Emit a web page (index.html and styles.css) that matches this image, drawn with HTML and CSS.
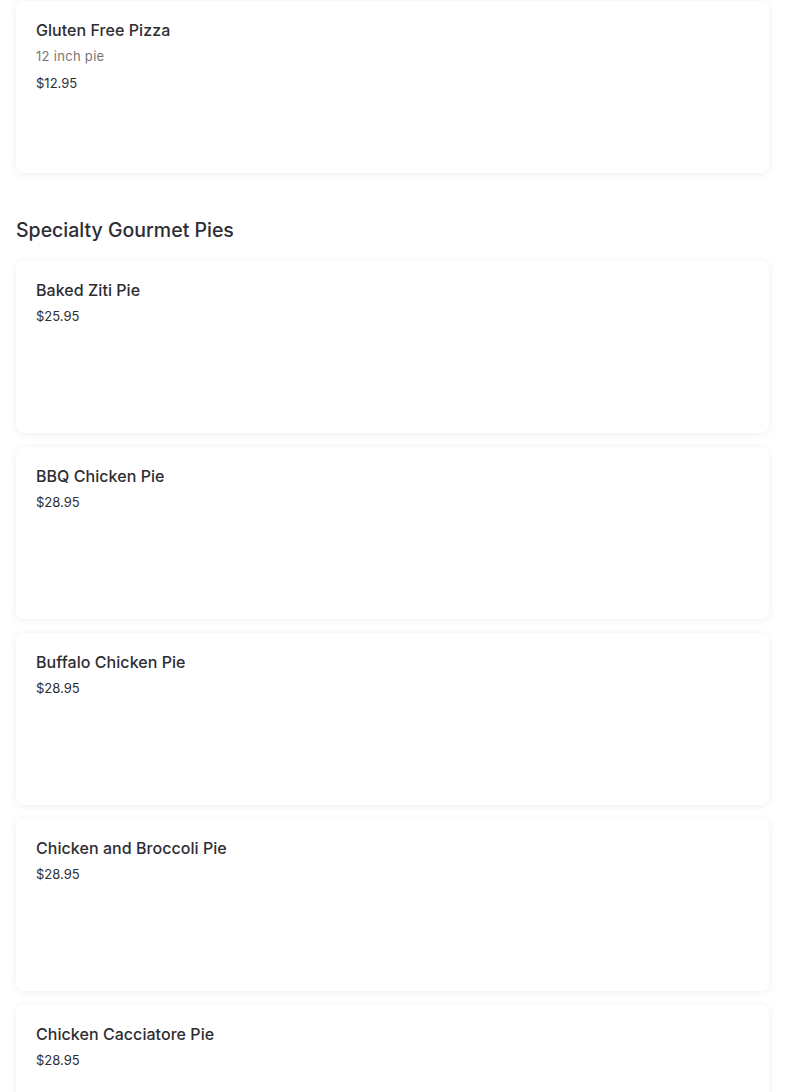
FILE: index.html
```html
<!DOCTYPE html>
<html>
<head>
<meta charset="utf-8">
<link rel="stylesheet" href="styles.css">
</head>
<body>
<div class="page">
  <div class="list">
    <div class="card">
      <div class="title">Gluten Free Pizza</div>
      <div class="desc">12 inch pie</div>
      <div class="price">$12.95</div>
    </div>
  </div>
  <h2 class="section">Specialty Gourmet Pies</h2>
  <div class="list">
    <div class="card">
      <div class="title">Baked Ziti Pie</div>
      <div class="price">$25.95</div>
    </div>
    <div class="card">
      <div class="title">BBQ Chicken Pie</div>
      <div class="price">$28.95</div>
    </div>
    <div class="card">
      <div class="title">Buffalo Chicken Pie</div>
      <div class="price">$28.95</div>
    </div>
    <div class="card">
      <div class="title">Chicken and Broccoli Pie</div>
      <div class="price">$28.95</div>
    </div>
    <div class="card">
      <div class="title">Chicken Cacciatore Pie</div>
      <div class="price">$28.95</div>
    </div>
  </div>
</div>
</body>
</html>
```
FILE: styles.css
```css
html, body {
  margin: 0;
  padding: 0;
  background: #ffffff;
}
body {
  font-family: "Inter", "Noto Sans", sans-serif;
  color: #2d2d33;
}
.page {
  padding: 1px 16px 0;
}
.list {
  display: flex;
  flex-direction: column;
  gap: 14px;
}
.card {
  height: 172px;
  box-sizing: border-box;
  padding: 18px 20px;
  background: #fff;
  border-radius: 8px;
  box-shadow: 0 1px 8px rgba(0, 0, 0, 0.07);
}
.title {
  font-size: 16px;
  font-weight: 500;
  line-height: 22px;
  letter-spacing: 0.05px;
  color: #2d2d33;
}
.desc {
  margin-top: 5px;
  font-size: 13px;
  line-height: 20px;
  letter-spacing: 0.3px;
  color: #767676;
}
.price {
  margin-top: 5px;
  font-size: 13px;
  line-height: 20px;
  color: #2d2d33;
}
.desc + .price {
  margin-top: 7px;
}
.section {
  margin: 43px 0 17px;
  font-size: 19.5px;
  font-weight: 500;
  line-height: 28px;
  color: #2d2d33;
}
```
